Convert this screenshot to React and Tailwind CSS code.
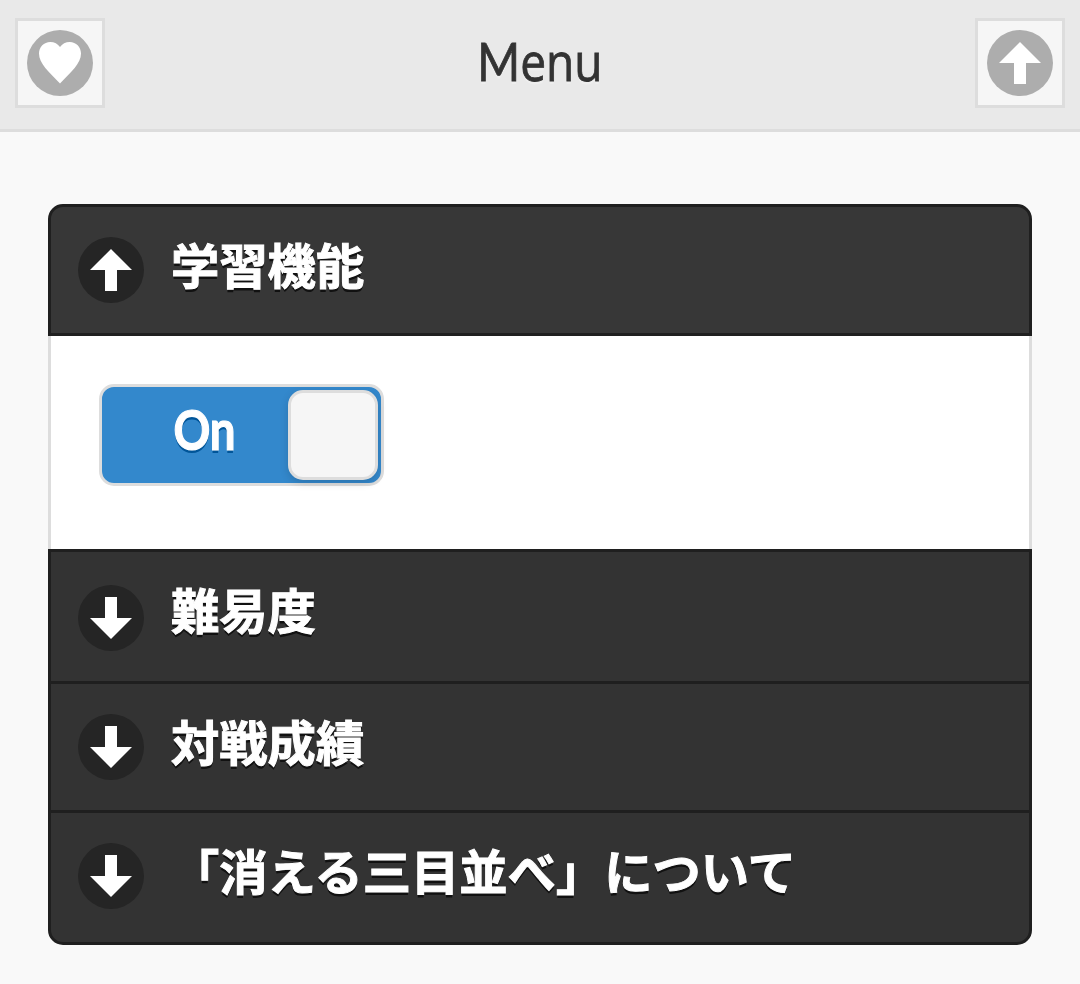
import React from 'react';

function Glyph({ name }) {
  return (
    <svg viewBox="0 0 14 14" className="h-[42px] w-[42px] fill-white">
      {name === 'up' && <path d="M7 0 0 7h5v7h4V7h5z" />}
      {name === 'down' && <path d="M7 14 14 7H9V0H5v7H0z" />}
      {name === 'heart' && (
        <path d="M7 1.67C6.3.62 5.1 0 3.75 0 1.65 0 0 1.65 0 3.85 0 7.1 3.3 10.1 7 13.8 10.7 10.1 14 7.1 14 3.85 14 1.65 12.35 0 10.25 0 8.9 0 7.7.62 7 1.67z" />
      )}
    </svg>
  );
}

function Disc({ name, className }) {
  return (
    <span className={`flex h-[66px] w-[66px] shrink-0 items-center justify-center rounded-full ${className}`}>
      <Glyph name={name} />
    </span>
  );
}

function IconButton({ name, label }) {
  return (
    <button aria-label={label} className="flex h-[90px] w-[90px] items-center justify-center border-[3px] border-[#ddd] bg-[#f6f6f6]">
      <Disc name={name} className="bg-[#adadad]" />
    </button>
  );
}

function Section({ icon, title, className, textClass }) {
  return (
    <h2 className={`flex items-start gap-[27px] border-[#1f1f1f] pl-[27px] ${className}`}>
      <Disc name={icon} className="bg-[#252525]" />
      <span className={`whitespace-nowrap text-[48.3px] leading-[66px] font-bold text-white [-webkit-text-stroke:1px_white] [text-shadow:0_3px_0_#111] ${textClass}`}>{title}</span>
    </h2>
  );
}

export default function App() {
  return (
    <div className="h-[984px] w-[1080px] overflow-hidden bg-[#f9f9f9] font-['Open_Sans','Noto_Sans_CJK_JP',sans-serif]">
      <header className="flex h-[132px] items-start justify-between border-b-[3px] border-[#ddd] bg-[#e9e9e9] px-[15px] pt-[18px]">
        <IconButton name="heart" label="Favorites" />
        <h1 className="-mt-[2px] origin-center scale-x-[0.87] text-[53px] leading-[90px] text-[#333] [-webkit-text-stroke:0.8px_#333] [text-shadow:0_3px_0_#eee]">
          <span className="font-['Lato',sans-serif]">M</span>enu
        </h1>
        <IconButton name="up" label="Up" />
      </header>
      <main className="px-12 pt-[72px] font-['Noto_Sans_CJK_JP',sans-serif]">
        <Section icon="up" title="学習機能" className="h-[132px] rounded-t-[15px] border-[3px] bg-[#373737] pt-[30px]" textClass="-mt-[7px]" />
        <div className="h-[213px] border-x-[3px] border-[#ddd] bg-white pt-12 pl-12">
          <div className="flex h-[102px] w-[285px] items-center justify-between rounded-[15px] border-[3px] border-[#ddd] bg-[#38c] pr-[3px]">
            <span className="flex w-[204px] justify-center font-['Lato',sans-serif]">
              <span className="-mt-[13px] scale-x-[0.83] text-[55px] leading-[96px] font-bold text-white [-webkit-text-stroke:1.2px_white] [text-shadow:0_3px_0_#059]">On</span>
            </span>
            <span className="-ml-[18px] h-[90px] w-[90px] shrink-0 rounded-[15px] border-[3px] border-[#ddd] bg-[#f6f6f6] shadow-[0_3px_9px_rgba(0,0,0,0.15)]" />
          </div>
        </div>
        <Section icon="down" title="難易度" className="h-[132px] border-x-[3px] border-t-[3px] bg-[#333] pt-[33px]" textClass="-mt-[10px]" />
        <Section icon="down" title="対戦成績" className="h-[129px] border-x-[3px] border-t-[3px] bg-[#333] pt-[30px]" textClass="-mt-[7px]" />
        <Section icon="down" title="「消える三目並べ」について" className="h-[135px] rounded-b-[15px] border-[3px] bg-[#333] pt-[30px]" textClass="-mt-[7px]" />
      </main>
    </div>
  );
}
